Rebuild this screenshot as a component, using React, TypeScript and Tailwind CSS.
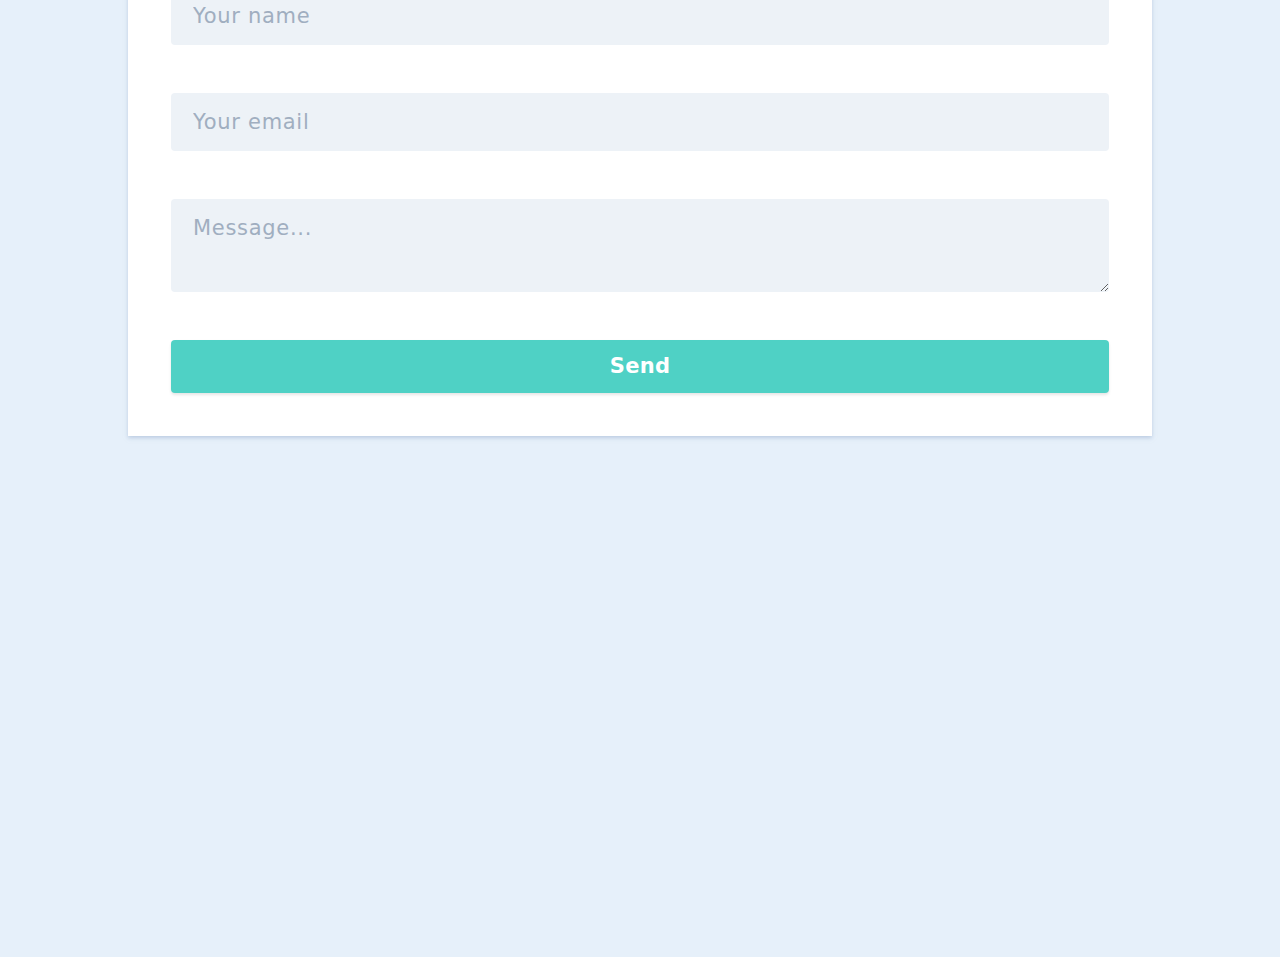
export default function App() {
  const field =
    "block w-full rounded bg-[#edf2f7] px-[22px] text-[21px] text-[#4a5568] placeholder-[#a0aec0] outline-none tracking-[0.7px]";

  return (
    <div className="min-h-[957px] bg-[#e6f0fa] font-['DejaVu_Sans',sans-serif] overflow-hidden">
      <div className="mx-auto mt-[-56px] w-[1024px] bg-white px-[43px] pt-[43px] pb-[43px] shadow-[0_2px_4px_rgba(160,180,210,0.6)]">
        <form className="flex flex-col gap-[48px]" onSubmit={(e) => e.preventDefault()}>
          <input type="text" placeholder="Your name" className={field + " h-[58px]"} />
          <input type="email" placeholder="Your email" className={field + " h-[58px]"} />
          <textarea placeholder="Message..." className={field + " h-[93px] py-[15px] leading-[28px]"} />
          <button
            type="submit"
            className="h-[53px] w-full rounded bg-[#4fd1c5] text-[21px] font-bold text-white tracking-[0.3px] shadow-[0_2px_3px_rgba(0,0,0,0.1)]"
          >
            Send
          </button>
        </form>
      </div>
    </div>
  );
}
